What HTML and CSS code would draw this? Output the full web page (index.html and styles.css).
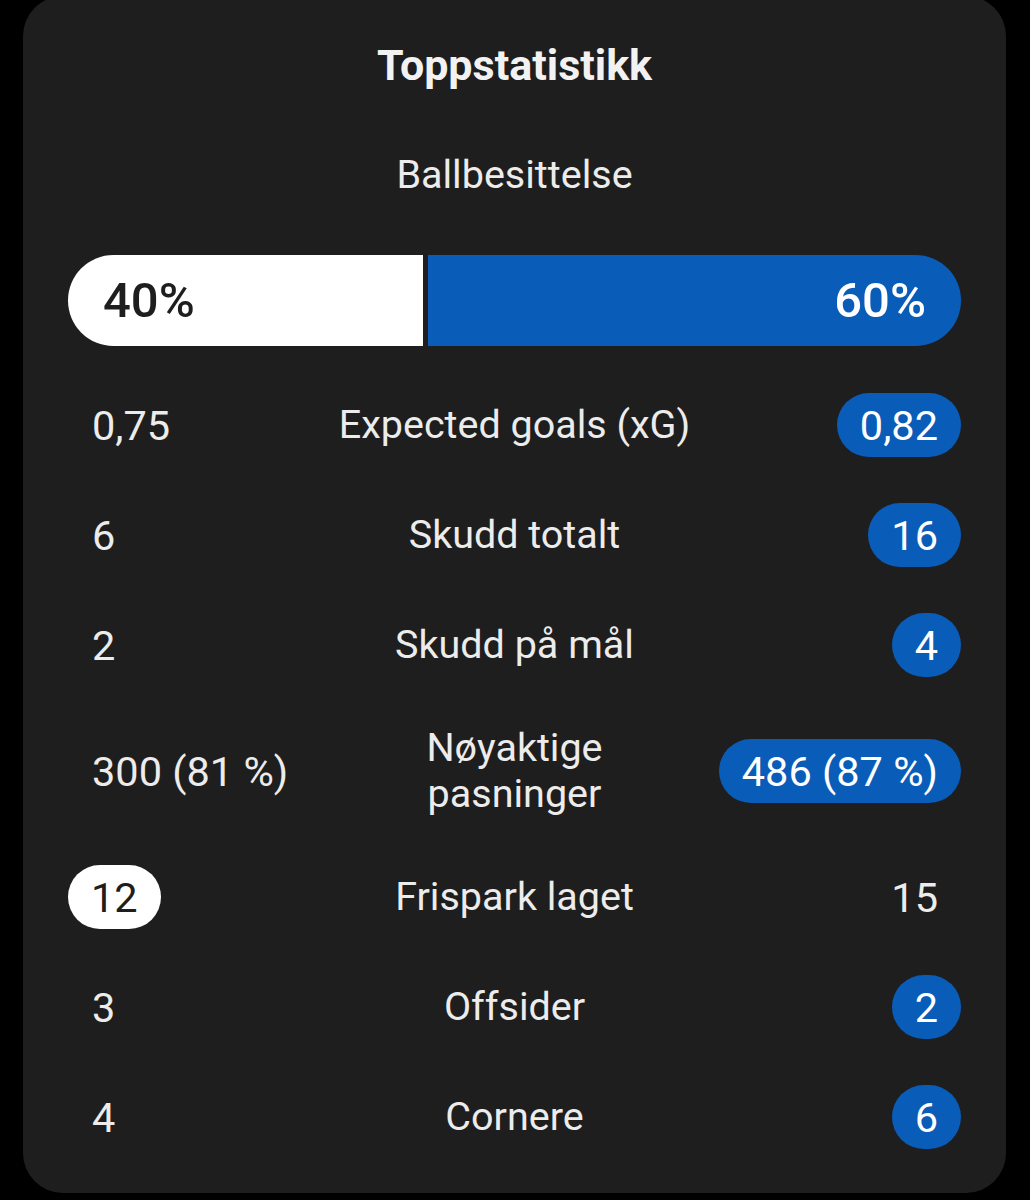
FILE: index.html
```html
<!DOCTYPE html>
<html lang="no">
<head>
<meta charset="utf-8">
<title>Toppstatistikk</title>
<link rel="stylesheet" href="styles.css">
</head>
<body>
<section class="card">
  <h1 class="title">Toppstatistikk</h1>
  <div class="subtitle">Ballbesittelse</div>
  <div class="possession">
    <div class="seg seg-home" style="width:40%">40%</div>
    <div class="seg seg-away" style="width:60%">60%</div>
  </div>
  <div class="rows">
    <div class="row">
      <div class="val left"><span class="num">0,75</span></div>
      <div class="label">Expected goals (xG)</div>
      <div class="val right"><span class="num pill-blue">0,82</span></div>
    </div>
    <div class="row">
      <div class="val left"><span class="num">6</span></div>
      <div class="label">Skudd totalt</div>
      <div class="val right"><span class="num pill-blue">16</span></div>
    </div>
    <div class="row">
      <div class="val left"><span class="num">2</span></div>
      <div class="label">Skudd på mål</div>
      <div class="val right"><span class="num pill-blue">4</span></div>
    </div>
    <div class="row tall">
      <div class="val left"><span class="num">300 (81 %)</span></div>
      <div class="label">Nøyaktige<br>pasninger</div>
      <div class="val right"><span class="num pill-blue">486 (87 %)</span></div>
    </div>
    <div class="row">
      <div class="val left"><span class="num pill-white">12</span></div>
      <div class="label">Frispark laget</div>
      <div class="val right"><span class="num">15</span></div>
    </div>
    <div class="row">
      <div class="val left"><span class="num">3</span></div>
      <div class="label">Offsider</div>
      <div class="val right"><span class="num pill-blue">2</span></div>
    </div>
    <div class="row">
      <div class="val left"><span class="num">4</span></div>
      <div class="label">Cornere</div>
      <div class="val right"><span class="num pill-blue">6</span></div>
    </div>
  </div>
</section>
</body>
</html>
```
FILE: styles.css
```css
* { box-sizing: border-box; }
html, body {
  margin: 0;
  padding: 0;
  background: #000;
  height: 1200px;
  overflow: hidden;
}
body {
  font-family: Roboto, "Liberation Sans", sans-serif;
  color: #ececec;
}
.card {
  margin: -4px 0 0 23px;
  width: 983px;
  height: 1197px;
  background: #1e1e1e;
  border-radius: 40px;
  padding: 39px 45px 21px;
}
.title {
  margin: 0;
  text-align: center;
  font-size: 43px;
  font-weight: 700;
  line-height: 60px;
  color: #f2f2f2;
}
.subtitle {
  margin-top: 57px;
  text-align: center;
  font-size: 39.5px;
  line-height: 46px;
}
.possession {
  margin-top: 57px;
  display: flex;
  gap: 5px;
  height: 91px;
}
.seg {
  flex-shrink: 1;
  min-width: 0;
  display: flex;
  align-items: center;
  font-size: 49px;
  font-weight: 500;
}
.seg-home {
  background: #fff;
  color: #1e1e1e;
  border-radius: 46px 0 0 46px;
  padding-left: 35px;
}
.seg-away {
  background: #0a5cb9;
  color: #fff;
  border-radius: 0 46px 46px 0;
  justify-content: flex-end;
  padding-right: 35px;
}
.rows {
  margin-top: 24px;
}
.row {
  display: grid;
  grid-template-columns: 1fr auto 1fr;
  align-items: center;
  min-height: 110px;
}
.row.tall {
  padding: 25px 0;
}
.label {
  text-align: center;
  font-size: 39.5px;
  line-height: 46px;
}
.val {
  display: flex;
}
.val.right {
  justify-content: flex-end;
}
.num {
  display: inline-flex;
  align-items: center;
  height: 64px;
  padding: 0 23px;
  border-radius: 32px;
  font-size: 41.5px;
  white-space: nowrap;
}
.val.left .num:not(.pill-white) {
  padding-left: 24px;
}
.pill-blue {
  background: #0a5cb9;
  color: #fff;
}
.pill-white {
  background: #fff;
  color: #1e1e1e;
}
```
